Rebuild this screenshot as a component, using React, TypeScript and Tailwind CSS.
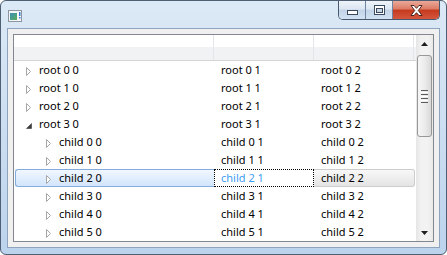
import React from "react";

const FONT = { fontFamily: '"Noto Sans", "Open Sans", sans-serif' };

type Row = { c0: string; c1: string; c2: string; depth: number; expanded?: boolean; selected?: boolean };

const rows: Row[] = [
  { c0: "root 0 0", c1: "root 0 1", c2: "root 0 2", depth: 0 },
  { c0: "root 1 0", c1: "root 1 1", c2: "root 1 2", depth: 0 },
  { c0: "root 2 0", c1: "root 2 1", c2: "root 2 2", depth: 0 },
  { c0: "root 3 0", c1: "root 3 1", c2: "root 3 2", depth: 0, expanded: true },
  { c0: "child 0 0", c1: "child 0 1", c2: "child 0 2", depth: 1 },
  { c0: "child 1 0", c1: "child 1 1", c2: "child 1 2", depth: 1 },
  { c0: "child 2 0", c1: "child 2 1", c2: "child 2 2", depth: 1, selected: true },
  { c0: "child 3 0", c1: "child 3 1", c2: "child 3 2", depth: 1 },
  { c0: "child 4 0", c1: "child 4 1", c2: "child 4 2", depth: 1 },
  { c0: "child 5 0", c1: "child 5 1", c2: "child 5 2", depth: 1 },
];

function Arrow({ expanded }: { expanded?: boolean }) {
  return (
    <span className="flex w-[13px] h-[18px] items-center">
      {expanded ? (
        <svg width="6" height="6" viewBox="0 0 6 6" className="mt-[3px]">
          <polygon points="5.5,0.5 5.5,5.5 0.5,5.5" fill="#3c3c3c" stroke="#3c3c3c" strokeWidth="0.6" />
        </svg>
      ) : (
        <svg width="6" height="9" viewBox="0 0 6 9" className="mt-[2px]">
          <polygon points="0.5,0.5 4.5,4.5 0.5,8.5" fill="#ffffff" stroke="#a6a6a6" strokeWidth="1" />
        </svg>
      )}
    </span>
  );
}

function TreeRow({ r }: { r: Row }) {
  const indent = r.depth === 0 ? 12 : 32;
  if (r.selected) {
    return (
      <div className="flex h-[18px] text-[11px] leading-[16px]">
        <div
          className="flex items-center ml-[1px] w-[199px] h-[18px] border border-r-0 border-[#84acdd] rounded-l-[3px] bg-[linear-gradient(to_bottom,#f1f7fe,#d2e5fc)]"
          style={{ paddingLeft: indent - 2 }}
        >
          <Arrow />
          <span className="text-black">{r.c0}</span>
        </div>
        <div className="flex items-center w-[100px] h-[18px] border border-dotted border-black bg-white pl-[6px]">
          <span className="text-[#3d9cf5]">{r.c1}</span>
        </div>
        <div className="flex items-center w-[101px] h-[18px] border border-l-0 border-[#cdcdcd] rounded-r-[3px] bg-[linear-gradient(to_bottom,#f8f8f8,#e4e4e4)] pl-[7px]">
          <span className="text-black">{r.c2}</span>
        </div>
      </div>
    );
  }
  return (
    <div className="flex h-[18px] text-[11px] leading-[18px] text-black">
      <div className="flex items-center w-[200px]" style={{ paddingLeft: indent }}>
        <Arrow expanded={r.expanded} />
        <span>{r.c0}</span>
      </div>
      <div className="w-[100px] pl-[7px]">{r.c1}</div>
      <div className="w-[100px] pl-[7px]">{r.c2}</div>
    </div>
  );
}

function AppIcon() {
  return (
    <svg width="15" height="12" viewBox="0 0 15 12">
      <defs>
        <linearGradient id="ig" x1="0" y1="0" x2="1" y2="1">
          <stop offset="0" stopColor="#3a8fb8" />
          <stop offset="1" stopColor="#5cae5a" />
        </linearGradient>
      </defs>
      <rect x="0.5" y="0.5" width="13" height="11" fill="#f4f6f8" stroke="#8c96a0" />
      <rect x="2" y="3" width="7" height="7" fill="url(#ig)" />
      <rect x="11" y="2" width="1.5" height="4" fill="#3a7bd5" />
      <rect x="11" y="7" width="1.5" height="1.5" fill="#3a7bd5" />
    </svg>
  );
}

function WinButtons() {
  return (
    <div className="flex h-[19px] border border-t-0 border-[#47596f] rounded-b-[5px] overflow-hidden">
      <div className="flex w-[27px] items-center justify-center border-r border-[#6f84a0] bg-[linear-gradient(to_bottom,#eef3f9_0%,#dbe6f2_45%,#c3d4e8_50%,#d2e2f3_100%)]">
        <svg width="11" height="5" viewBox="0 0 11 5" className="mt-[5px]">
          <rect x="0.5" y="0.5" width="10" height="4" fill="#ffffff" stroke="#3a4a5c" />
        </svg>
      </div>
      <div className="flex w-[27px] items-center justify-center border-r border-[#6f84a0] bg-[linear-gradient(to_bottom,#eef3f9_0%,#dbe6f2_45%,#c3d4e8_50%,#d2e2f3_100%)]">
        <svg width="11" height="10" viewBox="0 0 11 10">
          <rect x="0.5" y="0.5" width="10" height="9" fill="#ffffff" stroke="#3a4a5c" />
          <rect x="2.5" y="3.5" width="6" height="4" fill="#c9d6e4" stroke="#3a4a5c" />
        </svg>
      </div>
      <div className="flex w-[46px] items-center justify-center bg-[linear-gradient(to_bottom,#eaa99a_0%,#dc7b64_45%,#c6391e_50%,#d4573d_100%)]">
        <svg width="13" height="11" viewBox="0 0 13 11">
          <path
            d="M1,0.5 L4,0.5 L6.5,3.3 L9,0.5 L12,0.5 L8.3,5.5 L12,10.5 L9,10.5 L6.5,7.7 L4,10.5 L1,10.5 L4.7,5.5 Z"
            fill="#ffffff"
            stroke="#3b1a14"
            strokeWidth="0.9"
            strokeLinejoin="round"
          />
        </svg>
      </div>
    </div>
  );
}

function Scrollbar() {
  return (
    <div className="flex flex-col w-[17px] h-full bg-[linear-gradient(to_right,#e6e6e6,#f2f2f2_30%,#f2f2f2_70%,#e9e9e9)]">
      <div className="flex h-[17px] items-center justify-center">
        <svg width="7" height="4" viewBox="0 0 7 4">
          <polygon points="0,4 3.5,0 7,4" fill="#1f1f1f" />
        </svg>
      </div>
      <div className="h-[3px]" />
      <div className="mx-[1px] h-[82px] border border-[#979797] rounded-[3px] bg-[linear-gradient(to_right,#f6f6f6,#ececec_50%,#d9d9d9)] flex flex-col items-center justify-center gap-[1px]">
        <div className="w-[7px] h-[1px] bg-[#5c5c5c]" />
        <div className="w-[7px] h-[1px] bg-white" />
        <div className="w-[7px] h-[1px] bg-[#5c5c5c]" />
        <div className="w-[7px] h-[1px] bg-white" />
        <div className="w-[7px] h-[1px] bg-[#5c5c5c]" />
        <div className="w-[7px] h-[1px] bg-white" />
        <div className="w-[7px] h-[1px] bg-[#5c5c5c]" />
      </div>
      <div className="flex-1" />
      <div className="flex h-[17px] items-center justify-center">
        <svg width="7" height="4" viewBox="0 0 7 4">
          <polygon points="0,0 3.5,4 7,0" fill="#1f1f1f" />
        </svg>
      </div>
    </div>
  );
}

export default function App() {
  return (
    <div className="w-[447px] h-[255px] bg-white" style={FONT}>
      <div className="flex flex-col w-[447px] h-[255px] border border-[#4e5f74] rounded-[6px] overflow-hidden bg-[linear-gradient(to_bottom,#dce9f6_0%,#cfe0f2_40%,#bcd3ec_100%)]">
        <div className="flex flex-none h-[27px] items-start justify-between">
          <div className="ml-[7px] mt-[9px]">
            <AppIcon />
          </div>
          <div className="mr-[6px]">
            <WinButtons />
          </div>
        </div>
        <div className="flex-1 mx-[6px] mb-[6px] border border-[#8ea3bd] bg-[#f0f0f0] p-[5px] flex">
          <div className="flex flex-1 border border-[#828790] bg-white">
            <div className="flex flex-col w-[402px]">
              <div className="flex h-[26px] border-b border-[#d5d5d5] bg-[linear-gradient(to_bottom,#ffffff_0%,#ffffff_46%,#f1f2f4_46%,#f1f2f4_100%)]">
                <div className="w-[200px] border-r border-[#e2e5e9]" />
                <div className="w-[100px] border-r border-[#e2e5e9]" />
                <div className="w-[100px] border-r border-[#e2e5e9]" />
              </div>
              {rows.map((r) => (
                <TreeRow key={r.c0} r={r} />
              ))}
            </div>
            <Scrollbar />
          </div>
        </div>
      </div>
    </div>
  );
}
